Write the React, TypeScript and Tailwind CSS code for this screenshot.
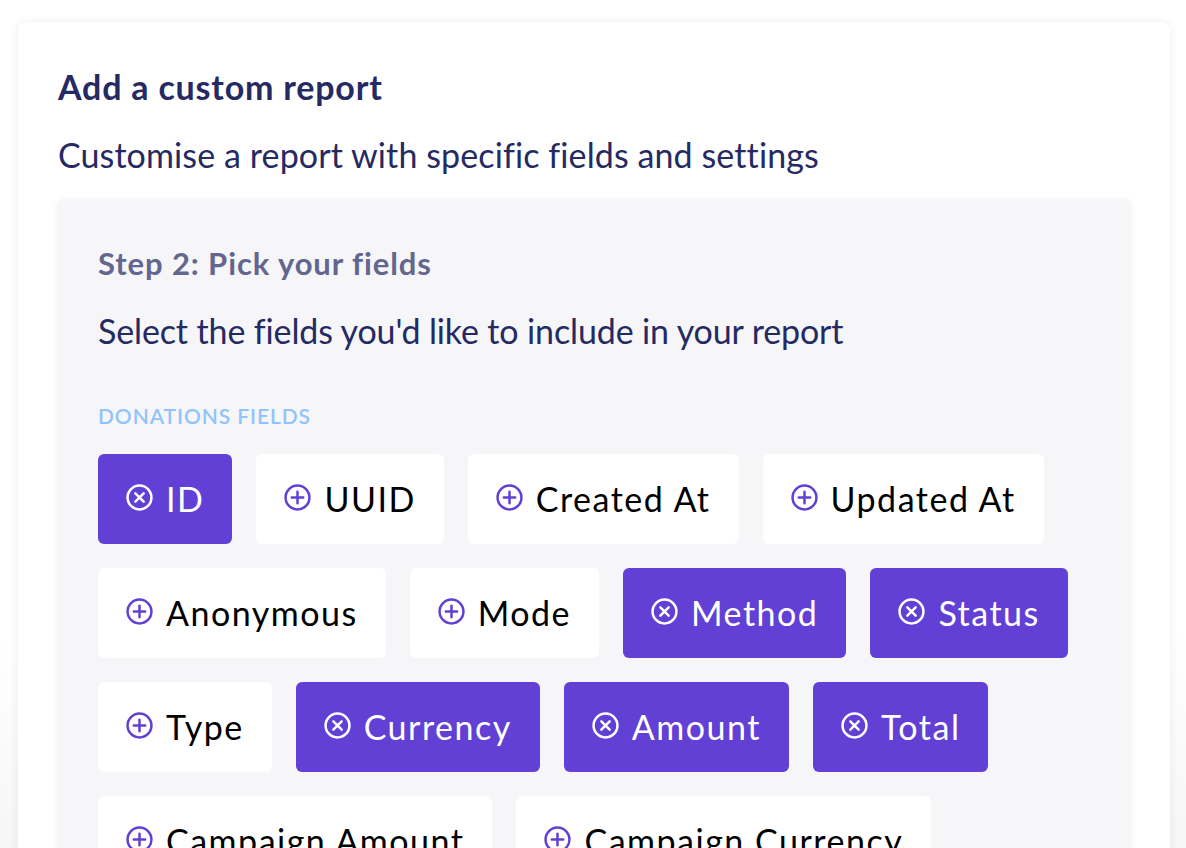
import React from "react";

type Field = { label: string; selected: boolean };

const FIELDS: Field[] = [
  { label: "ID", selected: true },
  { label: "UUID", selected: false },
  { label: "Created At", selected: false },
  { label: "Updated At", selected: false },
  { label: "Anonymous", selected: false },
  { label: "Mode", selected: false },
  { label: "Method", selected: true },
  { label: "Status", selected: true },
  { label: "Type", selected: false },
  { label: "Currency", selected: true },
  { label: "Amount", selected: true },
  { label: "Total", selected: true },
  { label: "Campaign Amount", selected: false },
  { label: "Campaign Currency", selected: false },
];

function PlusCircle() {
  return (
    <svg width="27" height="27" viewBox="0 0 26 26" fill="none" stroke="#6240d5" strokeWidth="2.4" strokeLinecap="round" className="-mt-1 shrink-0">
      <circle cx="13" cy="13" r="11.5" />
      <path d="M13 7.5v11M7.5 13h11" />
    </svg>
  );
}

function XCircle() {
  return (
    <svg width="27" height="27" viewBox="0 0 26 26" fill="none" stroke="#ffffff" strokeWidth="2.4" strokeLinecap="round" className="-mt-1 shrink-0">
      <circle cx="13" cy="13" r="11.5" />
      <path d="M9 9l8 8M17 9l-8 8" />
    </svg>
  );
}

function FieldChip({ field }: { field: Field }) {
  return (
    <button
      type="button"
      className={
        field.selected
          ? "h-[90px] flex items-center gap-[13px] px-7 rounded-md bg-[#6240d5] text-white text-[34px] leading-none tracking-[1.5px]"
          : "h-[90px] flex items-center gap-[13px] px-7 rounded-md bg-white text-black text-[34px] leading-none tracking-[1.5px]"
      }
    >
      {field.selected ? <XCircle /> : <PlusCircle />}
      <span>{field.label}</span>
    </button>
  );
}

export default function App() {
  return (
    <div
      className="h-[848px] w-full overflow-hidden bg-[linear-gradient(to_bottom,#ffffff_0%,#ffffff_75%,#f6f6f6_100%)] pt-[22px] pl-[18px] [font-variant-ligatures:none]"
      style={{ fontFamily: "Lato, 'Noto Sans', sans-serif" }}
    >
      <div className="w-[1152px] h-[900px] rounded-lg bg-white shadow-[0_0_10px_rgba(0,0,0,0.07)] px-10 pt-[45px]">
        <h1 className="text-[34px] leading-[40px] font-bold tracking-[0.8px] text-[#252a62]">Add a custom report</h1>
        <p className="mt-[28px] text-[34px] leading-[40px] tracking-[0.1px] text-[#252a62]">
          Customise a report with specific fields and settings
        </p>

        <div className="mt-[25px] h-[800px] rounded-md bg-[#f6f6f9] shadow-[0_0_6px_rgba(0,0,0,0.08)] px-10 pt-[43px]">
          <h2 className="text-[31px] leading-[40px] font-bold tracking-[0.9px] text-[#63668f]">Step 2: Pick your fields</h2>
          <p className="mt-[28px] text-[34px] leading-[40px] tracking-[-0.13px] text-[#252a62]">
            Select the fields you'd like to include in your report
          </p>
          <div className="mt-[53px] text-[21px] leading-[24px] font-semibold uppercase tracking-[0.9px] text-[#92c3fa]">
            Donations fields
          </div>
          <div className="mt-[26px] flex flex-wrap gap-6">
            {FIELDS.map((f) => (
              <FieldChip key={f.label} field={f} />
            ))}
          </div>
        </div>
      </div>
    </div>
  );
}
